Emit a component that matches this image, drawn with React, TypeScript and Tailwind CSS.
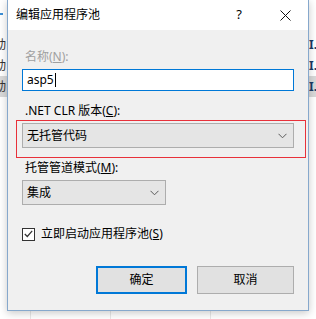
import React from "react";

// Rows of the list that sits behind the dialog
const rows = [
  { left: "动", right: "I.", active: false },
  { left: "动", right: "I.", active: false },
  { left: "动", right: "I.", active: true },
];

const Chevron: React.FC = () => (
  <svg width="9" height="6" viewBox="0 0 9 6" className="shrink-0">
    <path d="M0.5 0.8 L4.5 4.8 L8.5 0.8" fill="none" stroke="#5a5a5a" strokeWidth="1" />
  </svg>
);

const Combo: React.FC<{ value: string; className?: string }> = ({ value, className }) => (
  <div
    className={`flex h-[25px] items-center justify-between border border-[#adadad] bg-[#e5e5e5] pl-[4px] pr-[6px] ${className ?? ""}`}
  >
    <span className="text-[12px] leading-[16px] text-black">{value}</span>
    <Chevron />
  </div>
);

export default function App() {
  return (
    <div className="relative h-[319px] w-[316px] overflow-hidden bg-white font-['Noto_Sans','Noto_Sans_CJK_SC',sans-serif] text-[12px] text-black">
      {/* list view behind */}
      <div className="flex h-full">
        <div className="flex w-[31px] flex-col border-r border-[#e8e8e8] pt-[13px]">
          <div className="ml-[-1px] h-[2px] w-[4px] border-y border-[#3d8fd6]" />
          <div className="h-[19px]" />
          {rows.map((r, i) => (
            <div
              key={i}
              className={`flex h-[21px] items-center overflow-hidden ${r.active ? "bg-[#d9d9d9]" : ""}`}
            >
              <span className="ml-[-6px] leading-none text-[#333]">{r.left}</span>
            </div>
          ))}
        </div>
        <div className="w-[80px] border-r border-[#e8e8e8]" />
        <div className="w-[100px] border-r border-[#e8e8e8]" />
        <div className="flex flex-1 flex-col items-end pt-[34px]">
          {rows.map((r, i) => (
            <div
              key={i}
              className={`flex h-[21px] w-[8px] items-center overflow-hidden ${r.active ? "bg-[#d9d9d9]" : ""}`}
            >
              <span className="ml-[1px] font-bold leading-none text-[#1a3a66]">{r.right}</span>
            </div>
          ))}
        </div>
      </div>

      {/* dialog */}
      <div className="absolute left-[7px] top-0 flex h-[311px] w-[302px] flex-col border border-t-0 border-[#86a8cc] bg-[#f0f0f0] shadow-[0_2px_8px_rgba(0,0,0,0.22)]">
        <div className="flex h-[30px] shrink-0 items-center justify-between bg-white">
          <span className="pl-[8px] text-[12px] leading-[16px]">编辑应用程序池</span>
          <div className="flex h-full">
            <div className="flex w-[46px] items-center justify-center text-[13px]">?</div>
            <div className="flex w-[46px] items-center justify-center">
              <svg width="11" height="11" viewBox="0 0 11 11">
                <path d="M0.5 0.5 L10.5 10.5 M10.5 0.5 L0.5 10.5" stroke="#111" strokeWidth="1" />
              </svg>
            </div>
          </div>
        </div>

        <div className="flex flex-col px-[14px]">
          <label className="ml-[3px] mt-[19px] leading-[16px] text-[#a0a0a0]">
            名称(<span className="underline">N</span>):
          </label>
          <div className="mt-[4px] flex h-[22px] items-center border border-[#0078d7] bg-white pl-[4px]">
            <span className="leading-[16px]">asp5</span>
            <span className="ml-[1px] h-[14px] w-[1px] bg-black" />
          </div>

          <label className="ml-[3px] mt-[12px] leading-[16px]">
            .NET CLR 版本(<span className="underline">C</span>):
          </label>
          <div className="relative mt-[4px]">
            <Combo value="无托管代码" />
            <div className="pointer-events-none absolute -left-[6px] -right-[12px] -top-[3px] bottom-[-10px] border border-[#e8313a]" />
          </div>

          <label className="ml-[3px] mt-[12px] leading-[16px]">
            托管管道模式(<span className="underline">M</span>):
          </label>
          <Combo value="集成" className="mt-[4px] w-[144px]" />

          <div className="mt-[21px] flex h-[16px] items-center">
            <div className="flex h-[13px] w-[13px] items-center justify-center border border-[#333] bg-white">
              <svg width="9" height="8" viewBox="0 0 9 8">
                <path d="M0.8 4 L3.3 6.5 L8.2 0.8" fill="none" stroke="#333" strokeWidth="1.2" />
              </svg>
            </div>
            <span className="ml-[6px] leading-[16px]">
              立即启动应用程序池(<span className="underline">S</span>)
            </span>
          </div>

          <div className="mt-[24px] flex justify-end gap-[10px]">
            <button className="h-[28px] w-[91px] border-2 border-[#0078d7] bg-[#e1e1e1] text-[12px]">
              确定
            </button>
            <button className="h-[28px] w-[97px] border border-[#adadad] bg-[#e1e1e1] text-[12px]">
              取消
            </button>
          </div>
        </div>
      </div>
    </div>
  );
}
